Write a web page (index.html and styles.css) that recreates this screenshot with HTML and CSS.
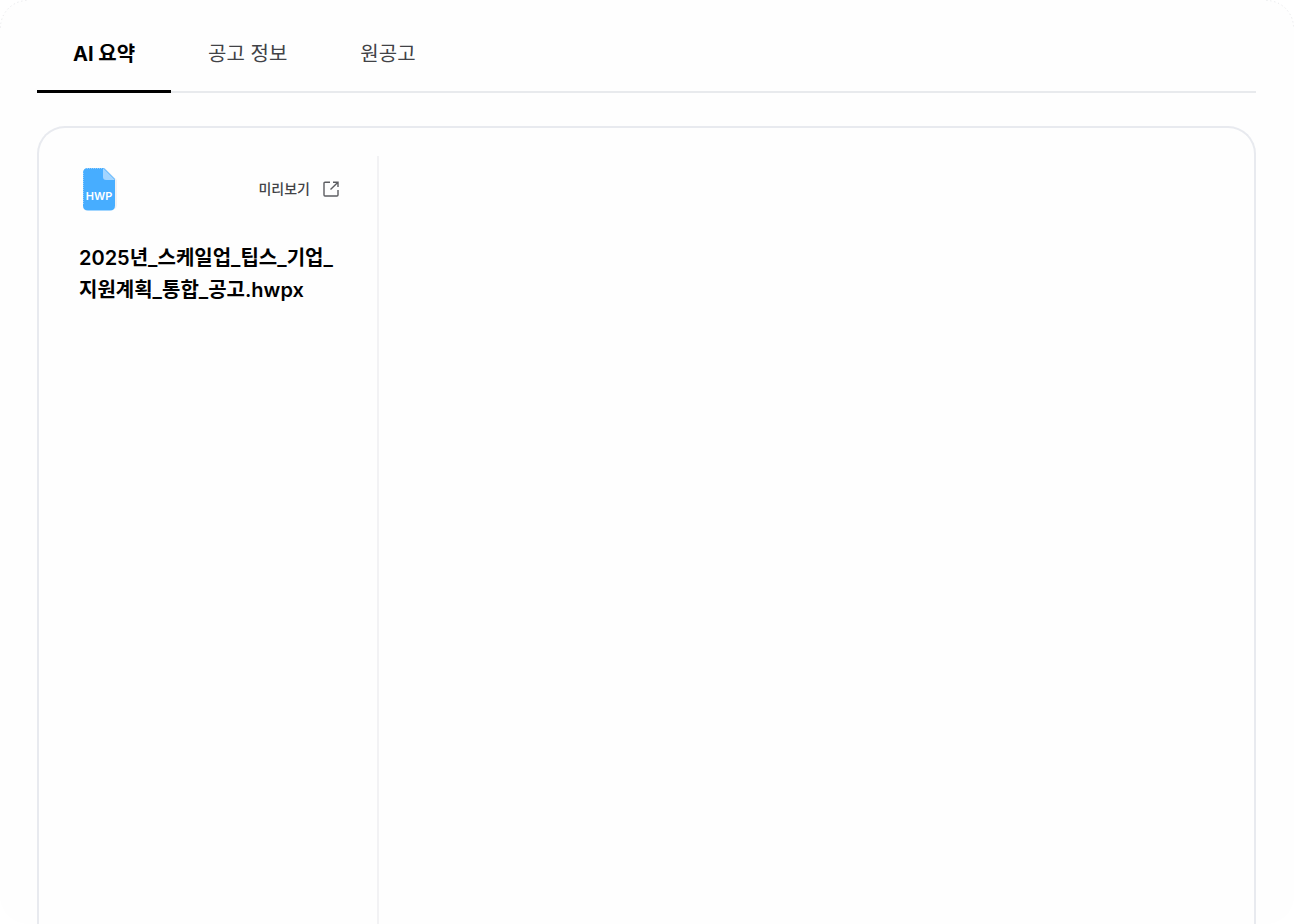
FILE: index.html
```html
<!DOCTYPE html>
<html lang="ko">
<head>
<meta charset="utf-8">
<meta name="viewport" content="width=device-width, initial-scale=1">
<title>AI 요약</title>
<link rel="stylesheet" href="styles.css">
</head>
<body>
<main class="sheet">
  <svg class="corner corner-left" width="28" height="28" viewBox="0 0 28 28" aria-hidden="true"><path d="M.5 27.5A27 27 0 0 1 27.5.5"/></svg>
  <svg class="corner corner-right" width="28" height="28" viewBox="0 0 28 28" aria-hidden="true"><path d="M.5.5A27 27 0 0 1 27.5 27.5"/></svg>
  <div class="tabs" role="tablist" aria-label="공고">
    <button class="tab tab-active" type="button" role="tab" aria-selected="true">AI 요약</button>
    <button class="tab" type="button" role="tab" aria-selected="false">공고 정보</button>
    <button class="tab" type="button" role="tab" aria-selected="false">원공고</button>
  </div>
  <section class="panel">
    <aside class="file">
      <div class="file-head">
        <svg class="file-icon" width="40" height="44" viewBox="0 0 40 44" role="img" aria-label="HWP">
          <path d="M26 1L38 13V38Q38 42 33 43Z" fill="#f0f1f4"/>
          <path d="M9 1H25L36 12V38.500Q36 43.500 31 43.500H9Q4 43.500 4 38.500V6Q4 1 9 1Z" fill="#47adff"/>
          <path d="M24 1L36 13H27Q24 13 24 10Z" fill="#a3d5ff"/>
          <path d="M8 1.500H24M4.500 6V38" fill="none" stroke="#fff" stroke-opacity=".4" stroke-dasharray="1 1"/>
          <text class="file-type" x="20" y="33" text-anchor="middle">HWP</text>
        </svg>
        <a class="preview" href="#preview">미리보기
          <svg width="16" height="16" viewBox="0 0 16 16" fill="none" stroke="#5c5d61" stroke-width="1.4" aria-hidden="true">
            <path d="M7 1.200H2Q1 1.200 1 2.200V14Q1 15 2 15H14Q15 15 15 14V9M10 1.200H15V6M14.700 1.500L7.500 8.500"/>
          </svg>
        </a>
      </div>
      <h1 class="file-name">2025년_스케일업_팁스_기업_<wbr>지원계획_통합_공고.hwpx</h1>
    </aside>
    <div class="summary"></div>
  </section>
</main>
</body>
</html>
```
FILE: styles.css
```css
* {
  box-sizing: border-box;
}

body {
  margin: 0;
  background: #fff;
  color: #000;
  font-family: Inter, "Noto Sans CJK KR", sans-serif;
}

.sheet {
  position: relative;
  display: flex;
  flex-direction: column;
  min-height: 100vh;
  padding: 16px 38px 0 37px;
  border-radius: 28px;
  background: #fefefe;
}

.corner {
  position: absolute;
  top: 0;
  fill: none;
  stroke: #e4e5e8;
  stroke-dasharray: 1 3;
}

.corner-left {
  left: 0;
}

.corner-right {
  right: 0;
}

.tabs {
  display: flex;
  gap: 1px;
  border-bottom: 2px solid #e8eaed;
}

.tab {
  height: 77px;
  margin-bottom: -2px;
  padding: 4px 36px 3px;
  border: 0;
  border-bottom: 3px solid transparent;
  background: none;
  color: #414246;
  font: 400 20px/28px Inter, "Noto Sans CJK KR", sans-serif;
}

.tab-active {
  border-bottom-color: #000;
  color: #000;
  font-weight: 700;
}

.panel {
  display: flex;
  flex: 1;
  margin-top: 33px;
  padding: 28px 40px 0;
  border: 2px solid #e8eaef;
  border-bottom: 0;
  border-radius: 28px 28px 0 0;
}

.file {
  width: 300px;
  padding: 11px 38px 0 0;
  border-right: 2px solid #f2f2f4;
}

.file-head {
  display: flex;
  align-items: center;
  justify-content: space-between;
}

.file-type {
  fill: #fff;
  font: 600 11px Inter, sans-serif;
}

.preview {
  display: flex;
  align-items: center;
  gap: 13px;
  color: #414246;
  font-size: 14px;
  font-weight: 500;
  line-height: 20px;
  text-decoration: none;
}

.file-name {
  margin: 31px 0 0;
  font-size: 20px;
  font-weight: 600;
  line-height: 32px;
  white-space: nowrap;
}

.summary {
  flex: 1;
}
```
